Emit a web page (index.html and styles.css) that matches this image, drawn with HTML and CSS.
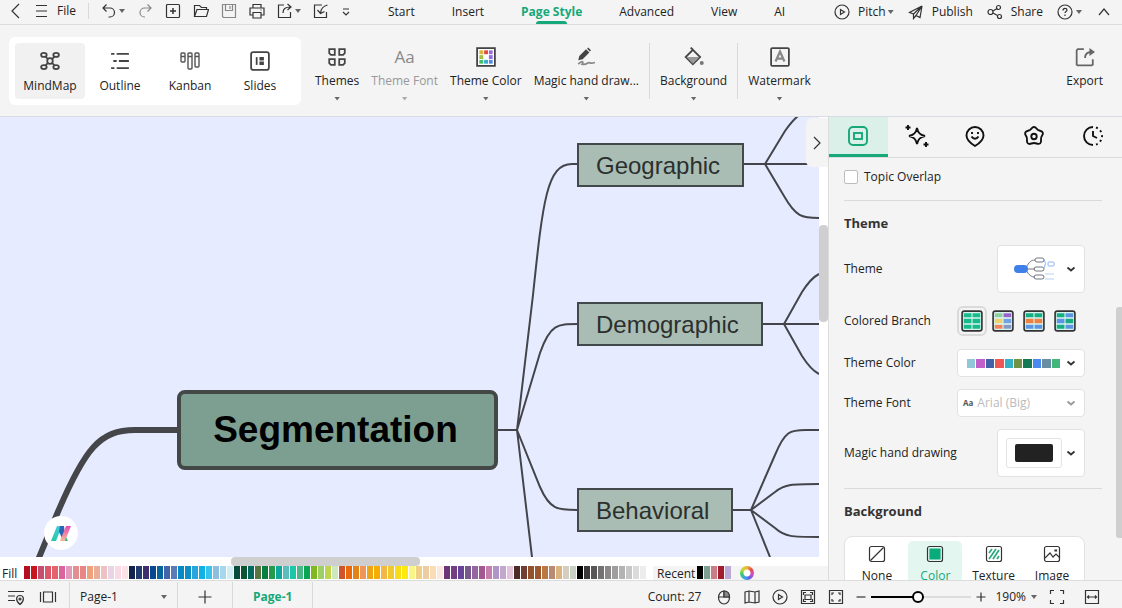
FILE: index.html
```html
<!DOCTYPE html>
<html lang="en">
<head>
<meta charset="utf-8">
<meta name="viewport" content="width=device-width, initial-scale=1">
<title>Segmentation mind map</title>
<link rel="stylesheet" href="styles.css">
<script src="app.js" defer></script>
</head>
<body>
<header class="topbar">
  <div class="quick">
    <button class="icon-btn" aria-label="Back"><svg class="i" viewBox="0 0 16 16"><path d="M11 1 4 8l7 7"/></svg></button>
    <button class="file-btn"><svg class="i" viewBox="0 0 16 16"><path d="M3 2.500h11M3 8h11M3 13.500h11"/></svg>File</button>
    <span class="vline short"></span>
    <button class="icon-btn" aria-label="Undo"><svg class="i" viewBox="0 0 16 16"><path d="M5.500 1.500 2 5l3.500 3.500M2 5h7a4.500 4.500 0 0 1 0 9H7.500"/></svg><span class="tri"></span></button>
    <button class="icon-btn redo" aria-label="Redo"><svg class="i" viewBox="0 0 16 16"><path d="M10.500 1.500 14 5l-3.500 3.500M14 5H7.500a4.500 4.500 0 0 0 0 9H8"/></svg></button>
    <button class="icon-btn" aria-label="New"><svg class="i" viewBox="0 0 16 16"><rect x="1.500" y="1.500" width="13" height="13" rx="1"/><path d="M8 5v6M5 8h6" stroke-width="1.500"/></svg></button>
    <button class="icon-btn" aria-label="Open"><svg class="i" viewBox="0 0 16 16"><path d="M1.500 13.500v-11h5l2 2h5v2M1.500 13.500l2.500-7h11.500l-2 7z"/></svg></button>
    <button class="icon-btn save" aria-label="Save"><svg class="i" viewBox="0 0 16 16"><path d="M1.500 1.500h13v13h-12l-1-1zM4.500 1.500v6h7v-6M9 3v3"/></svg></button>
    <button class="icon-btn" aria-label="Print"><svg class="i" viewBox="0 0 16 16"><path d="M4 5V1.500h8V5M4 12H1V5h14v7h-3M4 9.500h8v5.500H4zM11.500 7h1"/></svg></button>
    <button class="icon-btn" aria-label="Export file"><svg class="i" viewBox="0 0 16 16"><path d="M7 2H1.500v12.500h12V9M6 10c0-4 2-6 7.500-6M10.500 1l3.500 3-3.500 3"/></svg><span class="tri"></span></button>
    <button class="icon-btn" aria-label="Import file"><svg class="i" viewBox="0 0 16 16"><path d="M9 2H1.500v12.500h12V9M14.500 2c-4 1-6.500 3-7 8M4.500 7l3 3.500 4-2"/></svg></button>
    <button class="icon-btn" aria-label="More commands"><svg class="i" viewBox="0 0 16 16"><path d="M5 6h6M5 9l3 3 3-3"/></svg></button>
  </div>
  <nav class="menu">
    <button>Start</button><button>Insert</button><button class="on">Page Style</button><button>Advanced</button><button>View</button><button>AI</button>
  </nav>
  <div class="actions">
    <button><svg class="i" viewBox="0 0 16 16"><circle cx="8" cy="8" r="7"/><path d="M6.500 5.500v5l4-2.500z"/></svg><span class="with-tri">Pitch<span class="tri"></span></span></button>
    <button><svg class="i" viewBox="0 0 16 16"><path d="M14 2 1.500 8.500l4 1.500zM5.500 10v4.500l2.500-3M14 2l-2 11.500-4-2L14 2 5.500 10"/></svg>Publish</button>
    <button><svg class="i" viewBox="0 0 16 16"><circle cx="3.500" cy="8" r="2.500"/><circle cx="11.500" cy="3.500" r="2"/><circle cx="12.500" cy="12.500" r="2"/><path d="m6 7 4-2.500M6 9l4.500 2.500"/></svg>Share</button>
    <button class="help" aria-label="Help"><svg class="i" viewBox="0 0 16 16"><circle cx="8" cy="8" r="7"/><path d="M6 6.500c0-3 4-2.500 4-.500 0 1.500-2 1.500-2 3M8 10.500V12"/></svg><span class="tri"></span></button>
    <button aria-label="Collapse ribbon"><svg class="i" viewBox="0 0 16 16"><path d="m3 11 5-6 5 6"/></svg></button>
  </div>
</header>

<section class="ribbon">
  <div class="views">
    <button class="on"><svg class="i thick" viewBox="0 0 18 18"><circle cx="9" cy="9" r="2.500"/><ellipse cx="3.500" cy="3.500" rx="2.500" ry="1.800"/><ellipse cx="14.500" cy="3.500" rx="2.500" ry="1.800"/><ellipse cx="3.500" cy="14.500" rx="2.500" ry="1.800"/><ellipse cx="14.500" cy="14.500" rx="2.500" ry="1.800"/><path d="m5 5 2 2M13 5l-2 2M5 13l2-2M13 13l-2-2"/></svg>MindMap</button>
    <button><svg class="i thick" viewBox="0 0 18 18"><path d="M1 2.500h3M6 2.500h11M3 9h3M8 9h9M1 15.500h3M6 15.500h11"/></svg>Outline</button>
    <button><svg class="i kanban" viewBox="0 0 20 20"><rect x="1" y="2" width="4" height="9" rx="1"/><rect x="8" y="2" width="4" height="16" rx="1"/><rect x="15" y="2" width="4" height="14" rx="1"/><path d="M1 5.500h4M8 5.500h4M15 5.500h4"/></svg>Kanban</button>
    <button><svg class="i thick" viewBox="0 0 18 18"><rect x="1" y="1" width="16" height="16" rx="2"/><path d="M6 5.500v7"/><path d="M8.500 5.500h4v3h-4zM8.500 9.500h4v3h-4z" fill="#444" stroke="none"/></svg>Slides</button>
  </div>
  <div class="tools">
    <button><svg class="i thick" viewBox="0 0 18 18"><path d="M2 2h5v5H3.500L2 5.500zM11 2h5v3.500L14.500 7H11zM2 11h5v5H3.500L2 14.500zM11 11h5v3.500L14.500 16H11z"/></svg>Themes<span class="tri"></span></button>
    <button disabled><span class="aa">Aa</span>Theme Font<span class="tri"></span></button>
    <button><svg class="i thick" viewBox="0 0 18 18"><rect x="1" y="1" width="16" height="16" fill="#fff"/><g stroke="none"><path fill="#d9b53c" d="M3 3h3.500v3.500H3z"/><path fill="#e14b42" d="M7.300 3h3.500v3.500H7.300z"/><path fill="#a568d8" d="M11.600 3H15v3.500h-3.400z"/><path fill="#a2bf45" d="M3 7.300h3.500v3.500H3z"/><path fill="#906cf0" d="M11.600 7.300H15v3.500h-3.400z"/><path fill="#45bd68" d="M3 11.600h3.500V15H3z"/><path fill="#35aecb" d="M7.300 11.600h3.500V15H7.300z"/><path fill="#5287ef" d="M11.600 11.600H15V15h-3.400z"/></g></svg>Theme Color<span class="tri"></span></button>
    <button><svg class="i thick" viewBox="0 0 18 18"><path d="m2 12 1-4 6-6 3 3-6 6z" fill="#444" stroke="none"/><path d="m10 1.500 1-1 2.500 2.500-1 1z" fill="#444" stroke="none"/><path d="M2 15.500c4-4 5-2 3.500 0 5 1 5-3 7.500-1 1 .5 2-.5 4-.5" stroke="#888"/></svg>Magic hand draw...<span class="tri"></span></button>
    <span class="vline"></span>
    <button><svg class="i thick" viewBox="0 0 18 18"><path d="M8 2.500 14.500 9 8 15.500 1.500 9zM6 .500l3 3"/><path d="M2 9h12l-6 6z" fill="#999" stroke="none"/><circle cx="16" cy="14.500" r="1.800" fill="#777" stroke="none"/></svg>Background<span class="tri"></span></button>
    <span class="vline"></span>
    <button><svg class="i thick" viewBox="0 0 18 18"><rect x="1" y="1" width="16" height="16" rx="1"/><path d="m5 13 4-9 4 9M6.500 10.500h5" stroke="#888" stroke-width="2"/></svg>Watermark<span class="tri"></span></button>
  </div>
  <button class="export"><svg class="i thick" viewBox="0 0 18 18"><path d="M8 2H2.500L1.500 3v13l1 .5H15l1-.5v-5M9 10c0-4 2-5.500 6-5.500" stroke="#666"/><path d="m13 1 5 3.500L13 8z" fill="#666" stroke="none"/></svg>Export</button>
</section>

<main class="work">
  <div class="stage">
    <div class="canvas">
      <svg class="links" width="819" height="440" viewBox="0 117 819 440">
        <path class="trunk" d="M38 560 57 514C85 448 100 430 135 430H180"/>
        <path d="M497 430H517L533 295C543 200 547 164 572 164H577M517 430 540 353C550 324 558 324 577 324M517 430 540 487C550 510 558 510 577 510M517 430 532 557"/>
        <path d="M740 164H819M765 164 785 131Q792 121 798 116M765 164 784 196C796 217 802 218 819 218"/>
        <path d="M760 324H819M784 324 802 292Q811 278 819 274M784 324 802 356Q811 370 819 374"/>
        <path d="M727 510H751L775 455C785 431 790 430 806 430H819M751 510 775 492C785 484 792 484 819 484M751 510 775 528C785 537 792 537 819 537M751 510 770 557"/>
      </svg>
      <div class="node root">Segmentation</div>
      <div class="node geo">Geographic</div>
      <div class="node demo">Demographic</div>
      <div class="node beh">Behavioral</div>
      <button class="assistant" aria-label="AI assistant"><svg viewBox="0 0 20 18"><defs><linearGradient id="ga" x2="0" y2="1"><stop stop-color="#45c9e0"/><stop offset="1" stop-color="#27c9a4"/></linearGradient><linearGradient id="gb" x2="0" y2="1"><stop stop-color="#e84ab8"/><stop offset="1" stop-color="#f7b890"/></linearGradient></defs><path d="M6 2h5L5 17H0z" fill="url(#ga)"/><path d="M9 2h4l1 9-3 3-3-6z" fill="#2866b4"/><path d="M15 2h5l-6 15H9z" fill="url(#gb)"/><path d="m15 13 2 4h-3z" fill="#27b98c"/></svg></button>
    </div>
    <div class="vscroll"><span></span></div>
    <button class="fold" aria-label="Collapse panel"><svg class="i" viewBox="0 0 16 16"><path d="m5 2 6 6-6 6"/></svg></button>
    <div class="hscroll"><span></span></div>
    <div class="palette"><span class="fill-label">Fill</span><div class="swatches" id="swatches"></div><div class="recent">Recent<div class="swatches" id="recent"></div><button class="wheel" aria-label="More colors"></button></div></div>
  </div>

  <aside class="panel">
    <div class="tabs">
      <button class="on" aria-label="Page"><svg class="i" viewBox="0 0 24 24"><rect x="3" y="3" width="18" height="18" rx="4"/><rect x="8" y="9" width="8" height="6"/></svg></button>
      <button aria-label="AI"><svg class="i" viewBox="0 0 24 24"><path d="M12 4c1 5 3 7 8 8-5 1-7 3-8 8-1-5-3-7-8-8 5-1 7-3 8-8zM3 1v5M.500 3.500h5M21 18v5M18.500 20.500h5"/></svg></button>
      <button aria-label="Sticker"><svg class="i" viewBox="0 0 24 24"><path d="M12 22C7 19 3.500 16 3.500 11.500a8.500 8.500 0 0 1 17 0C20.500 16 17 19 12 22z"/><path d="M9 8v2M15 8v2M8.500 12.500c2 3 5 3 7 0"/></svg></button>
      <button aria-label="Icons"><svg class="i" viewBox="0 0 24 24"><path d="M9.500 4.500c1.500-2 3.500-2 5 0 1 1.500 2 2 3.500 2.300 3 .7 3.700 2.700 2 5-1 1.300-1.300 2.200-1 3.900.6 3.500-1.300 5-4.500 3.800-1.700-.6-3.300-.6-5 0-3.200 1.200-5.100-.3-4.500-3.800.3-1.700 0-2.600-1-3.900-1.700-2.300-1-4.300 2-5 1.500-.3 2.500-.8 3.500-2.300z"/><circle cx="12" cy="12.500" r="2.700"/></svg></button>
      <button aria-label="History"><svg class="i" viewBox="0 0 24 24"><path d="M12 3a9 9 0 0 0 0 18M12 7v5l4 2"/><path d="M15 3.500a9 9 0 0 1 0 17" stroke-dasharray="2 3"/></svg></button>
    </div>
    <div class="scroller">
      <label class="check"><input type="checkbox">Topic Overlap</label>
      <hr>
      <h2>Theme</h2>
      <div class="row tall"><span>Theme</span><button class="field big" aria-label="Theme"><svg class="preview" viewBox="0 0 42 24"><g fill="none" stroke="#72777f"><path d="M13 12h8M12 11c3-6 5-8 9-8M12 13c3 5 5 7 9 7"/><rect x="21" y="1" width="9" height="4" rx="2"/><rect x="20" y="10" width="10" height="4" rx="2"/><rect x="20" y="18" width="10" height="4" rx="2"/></g><g fill="none" stroke="#8eb4f2"><path d="M30 2q3 5 0 9"/><rect x="34" y="5" width="6" height="4" rx="1"/><path d="M31 17h9M31 22h9" opacity=".6"/></g><rect y="8" width="14" height="8" rx="4" fill="#3f80e8"/></svg><svg class="i chev" viewBox="0 0 10 10"><path d="m1.500 3.500 3.500 3 3.500-3"/></svg></button></div>
      <div class="row branches"><span>Colored Branch</span><div class="branch-set">
        <button class="on" aria-label="Single color"><svg viewBox="0 0 20 20"><rect class="frame" x="1" y="1" width="18" height="18" rx="2"/><path fill="#16ba8b" d="M2.500 3h7v3.500h-7zM10.500 3h7v3.500h-7zM2.500 8h7v4h-7zM10.500 8h7v4h-7zM2.500 13.500h7V17h-7zM10.500 13.500h7V17h-7z"/></svg></button>
        <button aria-label="Rainbow"><svg viewBox="0 0 20 20"><rect class="frame" x="1" y="1" width="18" height="18" rx="2"/><path fill="#8bcf9d" d="M2.500 3h7v3.500h-7z"/><path fill="#9963c9" d="M10.500 3h7v3.500h-7z"/><path fill="#eed36b" d="M2.500 8h7v4h-7z"/><path fill="#6fa3e5" d="M10.500 8h7v4h-7z"/><path fill="#f18258" d="M2.500 13.500h7V17h-7z"/><path fill="#849ac4" d="M10.500 13.500h7V17h-7z"/></svg></button>
        <button aria-label="Color by row"><svg viewBox="0 0 20 20"><rect class="frame" x="1" y="1" width="18" height="18" rx="2"/><path fill="#16ad83" d="M2.500 3h7v3.500h-7zM10.500 3h7v3.500h-7z"/><path fill="#ee8141" d="M2.500 8h7v4h-7zM10.500 8h7v4h-7z"/><path fill="#5b95e3" d="M2.500 13.500h7V17h-7zM10.500 13.500h7V17h-7z"/></svg></button>
        <button aria-label="Alternate color"><svg viewBox="0 0 20 20"><rect class="frame" x="1" y="1" width="18" height="18" rx="2"/><path fill="#16ad83" d="M2.500 3h7v3.500h-7zM10.500 8h7v4h-7zM2.500 13.500h7V17h-7z"/><path fill="#5b95e3" d="M10.500 3h7v3.500h-7zM2.500 8h7v4h-7zM10.500 13.500h7V17h-7z"/></svg></button>
      </div></div>
      <div class="row"><span>Theme Color</span><button class="field wide" aria-label="Theme Color"><span class="strip" id="strip"></span><svg class="i chev" viewBox="0 0 10 10"><path d="m1.500 3.500 3.500 3 3.500-3"/></svg></button></div>
      <div class="row"><label for="font">Theme Font</label><div class="field wide muted"><b>Aa</b><select id="font" disabled><option>Arial (Big)</option></select><svg class="i chev" viewBox="0 0 10 10"><path d="m1.500 3.500 3.500 3 3.500-3"/></svg></div></div>
      <div class="row tall"><span>Magic hand drawing</span><button class="field big" aria-label="Magic hand drawing"><span class="ink"><span></span></span><svg class="i chev" viewBox="0 0 10 10"><path d="m1.500 3.500 3.500 3 3.500-3"/></svg></button></div>
      <hr class="after-rows">
      <h2>Background</h2>
      <div class="kinds">
        <button><svg class="i" viewBox="0 0 18 18"><rect x="1.500" y="1.500" width="15" height="15" rx="2"/><path d="M2.500 15.500l13-13"/></svg>None</button>
        <button class="on"><svg class="i" viewBox="0 0 18 18"><rect x="1.500" y="1.500" width="15" height="15" rx="2"/><path d="M4 4h10v10H4z" fill="#0aab7b" stroke="#0aab7b"/></svg>Color</button>
        <button><svg class="i" viewBox="0 0 18 18"><rect x="1.500" y="1.500" width="15" height="15" rx="2"/><path d="m4 8 3-4M4 14l7-10M8 14l6-9M12 14l2-3" stroke="#2ba97e" stroke-width="1.700"/></svg>Texture</button>
        <button><svg class="i" viewBox="0 0 18 18"><rect x="1.500" y="1.500" width="15" height="15" rx="2"/><path d="m2 13 5-5 3 4 3-3 3.500 3.500M12 5h1.500v1H12z"/></svg>Image</button>
      </div>
    </div>
    <span class="panel-thumb"></span>
  </aside>
</main>

<footer class="status">
  <div class="pages">
    <button aria-label="Outline settings"><svg class="i" viewBox="0 0 18 18"><path d="M1 3.500h16M1 8h7M1 12.500h7M13 16.500c-5-4-4-9 0-9s5 5 0 9z"/><circle cx="13" cy="11" r="1"/></svg></button>
    <button aria-label="Page view"><svg class="i" viewBox="0 0 18 18"><path d="M1.500 4v10M16.500 4v10M4.500 4h9v10h-9z"/></svg></button>
    <span class="vline"></span>
    <div class="page-pick"><select aria-label="Current page"><option>Page-1</option></select><span class="tri"></span></div>
    <span class="vline"></span>
    <button class="add" aria-label="Add page"><svg class="i" viewBox="0 0 18 18"><path d="M9 2.500v13M2.500 9h13"/></svg></button>
    <span class="vline"></span>
    <button class="page-tab">Page-1</button>
    <span class="vline"></span>
  </div>
  <div class="viewing">
    <span class="count">Count: 27</span>
    <button aria-label="Mouse"><svg class="i" viewBox="0 0 16 16"><ellipse cx="8" cy="8.500" rx="5.500" ry="6.500"/><path d="M8 2v6M2.500 8h11"/><path d="M8 2c4 0 5.500 2 5.500 6H8z" fill="#888"/></svg></button>
    <button aria-label="Map"><svg class="i" viewBox="0 0 16 16"><path d="m1 3 4-1 6 1 4-1v11l-4 1-6-1-4 1zM5 2v11M11 3v11"/></svg></button>
    <button aria-label="Play"><svg class="i" viewBox="0 0 16 16"><circle cx="8" cy="8" r="7"/><path d="M6.500 5.500v5l4-2.500z"/></svg></button>
    <button aria-label="Focus"><svg class="i" viewBox="0 0 16 16"><path d="M1.500 1.500h13v13h-13zM5 6h6v4.500H5zM3.500 6V3.500H6M10 3.500h2.500V6M12.500 10v2.500H10M6 12.500H3.500V10"/></svg></button>
    <button aria-label="Fit"><svg class="i" viewBox="0 0 16 16"><path d="M1.500 1.500h13v13h-13zM4 6V4h2M10 4h2v2M12 10v2h-2M6 12H4v-2"/></svg></button>
    <div class="zoom">
      <button aria-label="Zoom out"><svg class="i" viewBox="0 0 10 10"><path d="M.500 5h9"/></svg></button>
      <input type="range" min="0" max="100" value="46" aria-label="Zoom">
      <button aria-label="Zoom in"><svg class="i" viewBox="0 0 10 10"><path d="M.500 5h9M5 .500v9"/></svg></button>
    </div>
    <button class="percent">190%<span class="tri"></span></button>
    <button aria-label="Full screen"><svg class="i" viewBox="0 0 16 16"><path d="M1.500 5V1.500H5M11 1.500h3.500V5M14.500 11v3.500H11M5 14.500H1.500V11"/></svg></button>
    <button class="fit-width" aria-label="Fit width"><svg class="i" viewBox="0 0 16 16"><path d="M1.500 1.500h13v13h-13zM3.500 8h9M5 6.500 3.500 8 5 9.500M11 6.500 12.500 8 11 9.500"/></svg></button>
  </div>
</footer>
</body>
</html>
```
FILE: styles.css
```css
* { box-sizing: border-box; }
body {
  margin: 0;
  height: 100vh;
  display: flex;
  flex-direction: column;
  overflow: hidden;
  background: #f4f4f4;
  color: #222;
  font: 12px/16px "Open Sans", "Noto Sans", sans-serif;
}
button, select, input { font: inherit; color: inherit; margin: 0; }
button { display: flex; align-items: center; padding: 0; border: 0; background: none; }
svg { display: block; flex: none; }
.i { width: 16px; height: 16px; fill: none; stroke: #333; stroke-width: 1.2; }
.thick { stroke: #444; stroke-width: 1.6; }
.kanban { stroke: #555; stroke-width: 1.4; }
.tri { width: 6px; height: 4px; background: #666; clip-path: polygon(0 0, 100% 0, 50% 100%); flex: none; }
.vline { width: 1px; background: #d9d9d9; flex: none; }

.topbar { display: flex; height: 25px; border-bottom: 1px solid #dcdcdc; flex: none; }
.quick { display: flex; align-items: center; width: 388px; padding: 0 0 2px 8px; gap: 12px; flex: none; }
.quick .icon-btn { position: relative; }
.quick .tri { position: absolute; left: 18px; }
.file-btn { gap: 8px; margin-left: -3px; }
.vline.short { height: 16px; }
.redo { margin-left: 8px; }
.redo .i, .save .i { stroke: #888; }
.quick .icon-btn:last-child { margin-left: -3px; }
.quick .icon-btn:nth-last-child(2) { margin-left: 8px; }
.menu { display: flex; gap: 37px; }
.menu button { position: relative; }
.menu .on { color: #16a879; font-weight: 700; }
.menu .on::after { content: ""; position: absolute; left: 15px; right: 15px; bottom: 0; height: 3px; border-radius: 3px 3px 0 0; background: #16a879; }
.actions { display: flex; gap: 14px; margin-left: auto; padding: 0 10px 0 0; }
.actions button { gap: 8px; }
.with-tri { display: flex; align-items: center; gap: 2px; }
.actions .help { gap: 3px; }

.ribbon { display: flex; align-items: center; height: 92px; padding: 0 19px 0 9px; border-bottom: 1px solid #d8dce2; flex: none; }
.ribbon button { flex-direction: column; white-space: nowrap; }
.ribbon .i { width: 20px; height: 20px; }
.views { display: flex; padding: 6px; background: #fff; border-radius: 6px; }
.views button { width: 70px; height: 56px; gap: 7px; padding-top: 8px; border-radius: 4px; }
.views .on { background: #f1f1f1; }
.tools { display: flex; gap: 12px; margin-left: 14px; height: 56px; }
.tools button, .export { gap: 6px; height: 56px; padding-top: 4px; }
.tools .tri { margin-top: 2px; }
.tools .vline { margin: 0 -2px; }
.tools button:disabled { color: #999; }
.tools button:disabled .tri { background: #aaa; }
.aa { font-size: 17px; line-height: 20px; color: #888; }
.export { margin-left: auto; }

.work { display: flex; flex: 1; min-height: 0; }
.stage { position: relative; flex: 1; min-width: 0; display: grid; grid-template: minmax(0, 1fr) 9px 15px / minmax(0, 1fr) 9px; background: #fff; }
.canvas { position: relative; overflow: hidden; background: #e7ebff; }
.links { position: absolute; left: 0; top: 0; fill: none; stroke: #43454b; stroke-width: 2; }
.links .trunk { stroke: #454649; stroke-width: 6; }
.node { position: absolute; display: flex; align-items: center; padding: 2px 22px 0 17px; height: 44px; border: 2px solid #43484b; background: #a9bdb4; color: #2b302e; font: 24px/30px "Liberation Sans", Arial, sans-serif; }
.root { left: 177px; top: 273px; width: 321px; height: 80px; padding: 0 4px 0 0; justify-content: center; border: 4px solid #434746; border-radius: 8px; background: #7d9f91; color: #000; font-size: 37px; font-weight: 700; }
.geo { left: 577px; top: 26px; }
.demo { left: 577px; top: 185px; }
.beh { left: 577px; top: 371px; }
.assistant { position: absolute; left: 44px; bottom: 7px; width: 34px; height: 34px; justify-content: center; border-radius: 50%; background: #fff; }
.assistant svg { width: 20px; height: 18px; }
.vscroll span { display: block; height: 97px; margin-top: 108px; border-radius: 4px; background: #cfcfcf; }
.fold { position: absolute; right: 0; top: 1px; width: 22px; height: 49px; justify-content: center; border-radius: 6px 0 0 6px; background: #f4f4f4; }
.hscroll { grid-column: 1 / -1; }
.hscroll span { display: block; width: 189px; height: 9px; margin-left: 231px; border-radius: 4px; background: #cfcfcf; }
.palette { grid-column: 1 / -1; display: flex; overflow: hidden; border-bottom: 1px solid #dcdcdc; white-space: nowrap; }
.fill-label { width: 24px; padding-left: 2px; flex: none; }
.swatches { display: flex; gap: 1px; flex: none; }
.swatches i { width: 6px; height: 13px; }
.recent { display: flex; flex: 1; gap: 2px; margin-left: 7px; padding-left: 4px; background: #f4f4f4; }
.wheel { width: 14px; height: 14px; margin-left: 7px; border-radius: 50%; background: radial-gradient(#fff 0 3px, transparent 4px), conic-gradient(#f0b43a, #e34d4d, #d94bc5, #6a5be8, #37a7e8, #3bc864, #c4d939, #f0b43a); }

.panel { position: relative; display: flex; flex-direction: column; width: 294px; border-left: 1px solid #dcdcdc; border-bottom: 1px solid #dcdcdc; flex: none; }
.tabs { display: flex; border-bottom: 1px solid #dcdcdc; flex: none; }
.tabs button { flex: 1; height: 40px; justify-content: center; border-bottom: 3px solid transparent; }
.tabs .i { width: 24px; height: 24px; stroke: #111; stroke-width: 1.9; }
.tabs .on { background: #daf0e9; border-color: #16a879; }
.tabs .on .i { stroke: #16a879; }
.scroller { flex: 1; min-height: 0; overflow: hidden; padding: 10px 20px 0 15px; }
.check { display: flex; align-items: center; gap: 6px; height: 18px; }
.check input { appearance: none; width: 14px; height: 14px; border: 1px solid #bdbdbd; border-radius: 2px; background: #fff; }
hr { height: 1px; margin: 14px 0; border: 0; background: #dadada; }
hr.after-rows { margin-top: 11px; }
h2 { margin: 0; padding-bottom: 2px; font-size: 13px; line-height: 16px; color: #333; }
.scroller .row { display: flex; align-items: center; justify-content: space-between; height: 28px; margin: 12px 17px 0 0; }
.scroller .row.tall { height: 48px; }
.scroller .row.branches { height: 32px; margin-right: 22px; }
.branch-set { display: flex; align-items: center; gap: 1px; }
.branch-set button { justify-content: center; width: 30px; height: 30px; border: 2px solid transparent; border-radius: 6px; }
.branch-set .on { border-color: #dadada; }
.branch-set svg { width: 22px; height: 22px; }
.frame { fill: #d9f3ee; stroke: #333; stroke-width: 1.5; }
.field { display: flex; align-items: center; justify-content: space-between; padding: 0 8px; height: 28px; border: 1px solid #e2e2e2; border-radius: 4px; background: #fff; }
.field.wide { width: 128px; }
.field.big { width: 88px; height: 48px; }
.chev { width: 10px; height: 10px; stroke-width: 1.8; }
.preview { width: 42px; height: 24px; margin-left: 8px; }
.strip { display: flex; gap: 1px; width: 93px; margin-left: 1px; }
.strip i { flex: 1; height: 9px; }
.muted { padding-left: 5px; }
.muted b { font-size: 8px; color: #555; }
.muted select { flex: 1; appearance: none; border: 0; padding: 0; margin-left: 4px; background: none; color: #bbb; opacity: 1; }
.muted .i { stroke: #999; }
.ink { display: flex; padding: 5px 8px; border: 1px solid #e4e4e4; border-radius: 3px; }
.ink span { width: 38px; height: 18px; border-radius: 2px; background: #222; }
.ink + .chev { margin-left: 3px; }
.kinds { display: flex; justify-content: space-between; margin: 15px 17px 0 0; padding: 4px 5px; border: 1px solid #e2e2e2; border-radius: 8px; background: #fff; }
.kinds button { flex-direction: column; gap: 5px; width: 54px; padding: 4px 0 8px; border-radius: 5px; }
.kinds .i { width: 18px; height: 18px; }
.kinds .on { background: #e4f6f0; color: #16a879; }
.panel-thumb { position: absolute; right: 0; top: 190px; width: 6px; height: 231px; border-radius: 3px 0 0 3px; background: #cfcfcf; }

.status { display: flex; justify-content: space-between; height: 27px; flex: none; }
.pages, .viewing { display: flex; align-items: center; height: 32px; }
.pages .i { width: 18px; height: 18px; }
.pages { gap: 14px; padding-left: 7px; }
.pages .vline { height: 30px; }
.pages > .vline:nth-of-type(1) { margin-left: -2px; }
.page-pick { display: flex; align-items: center; width: 87px; margin: 0 -4px; }
.page-pick select { flex: 1; appearance: none; border: 0; padding: 0; background: none; }
.add { margin: 0 4px; }
.page-tab { margin: 0 6px; color: #16a879; font-weight: 700; }
.viewing { gap: 12px; padding-right: 22px; }
.count { margin-right: 3px; }
.zoom { display: flex; align-items: center; gap: 5px; }
.zoom .i { width: 10px; height: 10px; }
.zoom input { appearance: none; width: 100px; height: 12px; background: linear-gradient(90deg, #000 46%, #dcdcdc 46%) center / 100% 2px no-repeat; }
.zoom input::-webkit-slider-thumb { appearance: none; width: 12px; height: 12px; border: 2px solid #000; border-radius: 50%; background: #fff; }
.percent { gap: 5px; margin-left: -3px; }
.fit-width { margin-left: 7px; }
```
FILE: app.js
```js
const fills = `b50d22 c9151f c44f72 dc5769 e6636d da659c e29abb e28f91 e78587 efa17c e9ad98 edc2c2 ead4e3 f8d9e4 fbe2e8
14234b 233a70 3f2e6e 08478e 08659c 4164ac 5a7bb8 0789c6 0c8fc6 28a6dc 0fb2e5 38c3ee 8fbddd a5d8ec d2edf3
064b3b 0b5630 04695d 57733f 087d42 249a4a 0da79c 5cbcbe 1bc7a6 4bb889 0ba653 83b71e 9bcf68 bed54d cee8bd
d1532c eb6908 e28417 ee9659 eda518 f7ac00 f4b743 efc92e f8dc16 fdea0c faf589 f0cf84 edcca2 f9ddb5 fbe9df
6d3678 733e84 674497 77598e 9566a3 a3588f c67fad ae96c8 c3a7cd e6c3dc
4c2b24 703e35 955129 9c572c bb7843 b98b75 dbb381 d4cebf c9d0c6
000000 3d393a 585657 737172 8a8889 9f9d9e b4b3b3 c8c7c7 dcdbdb ededed`;

function paint(id, list) {
  document.getElementById(id).innerHTML = list.trim().split(/\s+/)
    .map(c => `<i style="background:#${c}"></i>`).join('');
}
paint('swatches', fills);
paint('recent', '000000 7d9f91 ca7d85 a21c2e bda9d6');
paint('strip', '91c7d9 c060c8 4261a7 ef5757 31b2c5 709346 147a55 4b88f0 698da3 43b77b');
```
